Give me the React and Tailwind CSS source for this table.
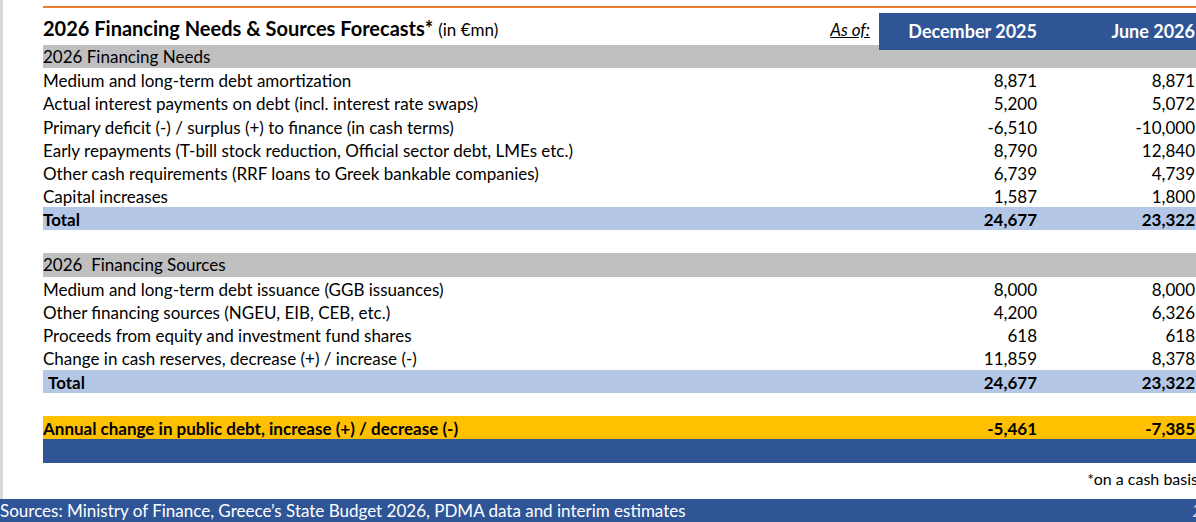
import React from 'react';

const needs = [
  ['Medium and long-term debt amortization', '8,871', '8,871', 'h-[23px]'],
  ['Actual interest payments on debt (incl. interest rate swaps)', '5,200', '5,072', 'h-[24px]'],
  ['Primary deficit (-) / surplus (+) to finance (in cash terms)', '-6,510', '-10,000', 'h-[23px]'],
  ['Early repayments (T-bill stock reduction, Official sector debt, LMEs etc.)', '8,790', '12,840', 'h-[23px]'],
  ['Other cash requirements (RRF loans to Greek bankable companies)', '6,739', '4,739', 'h-[23px]'],
  ['Capital increases', '1,587', '1,800', 'h-[23px]'],
];

const sources = [
  ['Medium and long-term debt issuance (GGB issuances)', '8,000', '8,000', 'h-[23px]'],
  ['Other financing sources (NGEU, EIB, CEB, etc.)', '4,200', '6,326', 'h-[23px]'],
  ['Proceeds from equity and investment fund shares', '618', '618', 'h-[23px]'],
  ['Change in cash reserves, decrease (+) / increase (-)', '11,859', '8,378', 'h-[24px]'],
];

function Row({ label, a, b, h = 'h-[23px]', className = '', labelClass = '' }) {
  return (
    <div className={`grid grid-cols-[836px_161px_158px] items-center ${h} ${className}`}>
      <div className={`whitespace-nowrap ${labelClass}`}>{label}</div>
      <div className="pr-[3px] text-right">{a}</div>
      <div className="pr-[3px] text-right">{b}</div>
    </div>
  );
}

export default function App() {
  return (
    <div
      className="relative flex h-[522px] w-[1196px] flex-col overflow-hidden bg-white text-[17px] text-black"
      style={{ fontFamily: 'Lato, "Open Sans", sans-serif' }}
    >
      <div className="flex min-h-0 flex-1">
        {/* left page edge */}
        <div className="w-[3px] shrink-0 bg-[#d9d9d9]" />
        <div className="ml-[40px] min-w-0 flex-1">
          <div className="mt-[6px] h-[2px] bg-[#ed7d31]" />

          {/* header */}
          <div className="mt-[5px] grid h-[31px] grid-cols-[836px_161px_158px] items-center">
            <div className="flex items-baseline justify-between pr-[9px] pb-[7px]">
              <div className="whitespace-nowrap">
                <span className="text-[20px] font-bold">2026 Financing Needs &amp; Sources Forecasts*</span>
                <span className="ml-[5px] text-[17px]">(in €mn)</span>
              </div>
              <span className="text-[17px] italic underline">As of:</span>
            </div>
            <div className="flex h-full items-center justify-end bg-[#2f5597] pr-[3px] text-[18px] font-bold text-white">
              December 2025
            </div>
            <div className="flex h-full items-center justify-end bg-[#2f5597] pr-[3px] text-[18px] font-bold text-white">
              June 2026
            </div>
          </div>

          <div className="mt-[1px] flex h-[23px] items-center bg-[#bfbfbf]">2026 Financing Needs</div>
          {needs.map(([l, a, b, h]) => (
            <Row key={l} label={l} a={a} b={b} h={h} />
          ))}
          <Row label="Total" a="24,677" b="23,322" className="bg-[#b4c7e7] font-bold" />

          <div className="h-[23px]" />
          <div className="flex h-[24px] items-center bg-[#bfbfbf]">2026&nbsp; Financing Sources</div>
          {sources.map(([l, a, b, h]) => (
            <Row key={l} label={l} a={a} b={b} h={h} />
          ))}
          <Row label="Total" a="24,677" b="23,322" className="bg-[#b4c7e7] font-bold" labelClass="pl-[5px]" />

          <div className="h-[23px]" />
          <Row
            label="Annual change in public debt, increase (+) / decrease (-)"
            a="-5,461"
            b="-7,385"
            className="bg-[#ffc000] font-bold"
          />
          <div className="h-[24px] bg-[#2f5597]" />

          <div className="mt-[5px] flex h-[22px] w-[1155px] items-center justify-end text-[16px]">*on a cash basis</div>
        </div>
      </div>

      {/* footer */}
      <div className="flex h-[23px] shrink-0 items-center justify-between bg-[#2f5597] text-[17px] text-white">
        <span className="whitespace-nowrap">Sources: Ministry of Finance, Greece’s State Budget 2026, PDMA data and interim estimates</span>
        <span className="mr-[-6px] italic text-[#c9d3e8]">2</span>
      </div>
    </div>
  );
}
